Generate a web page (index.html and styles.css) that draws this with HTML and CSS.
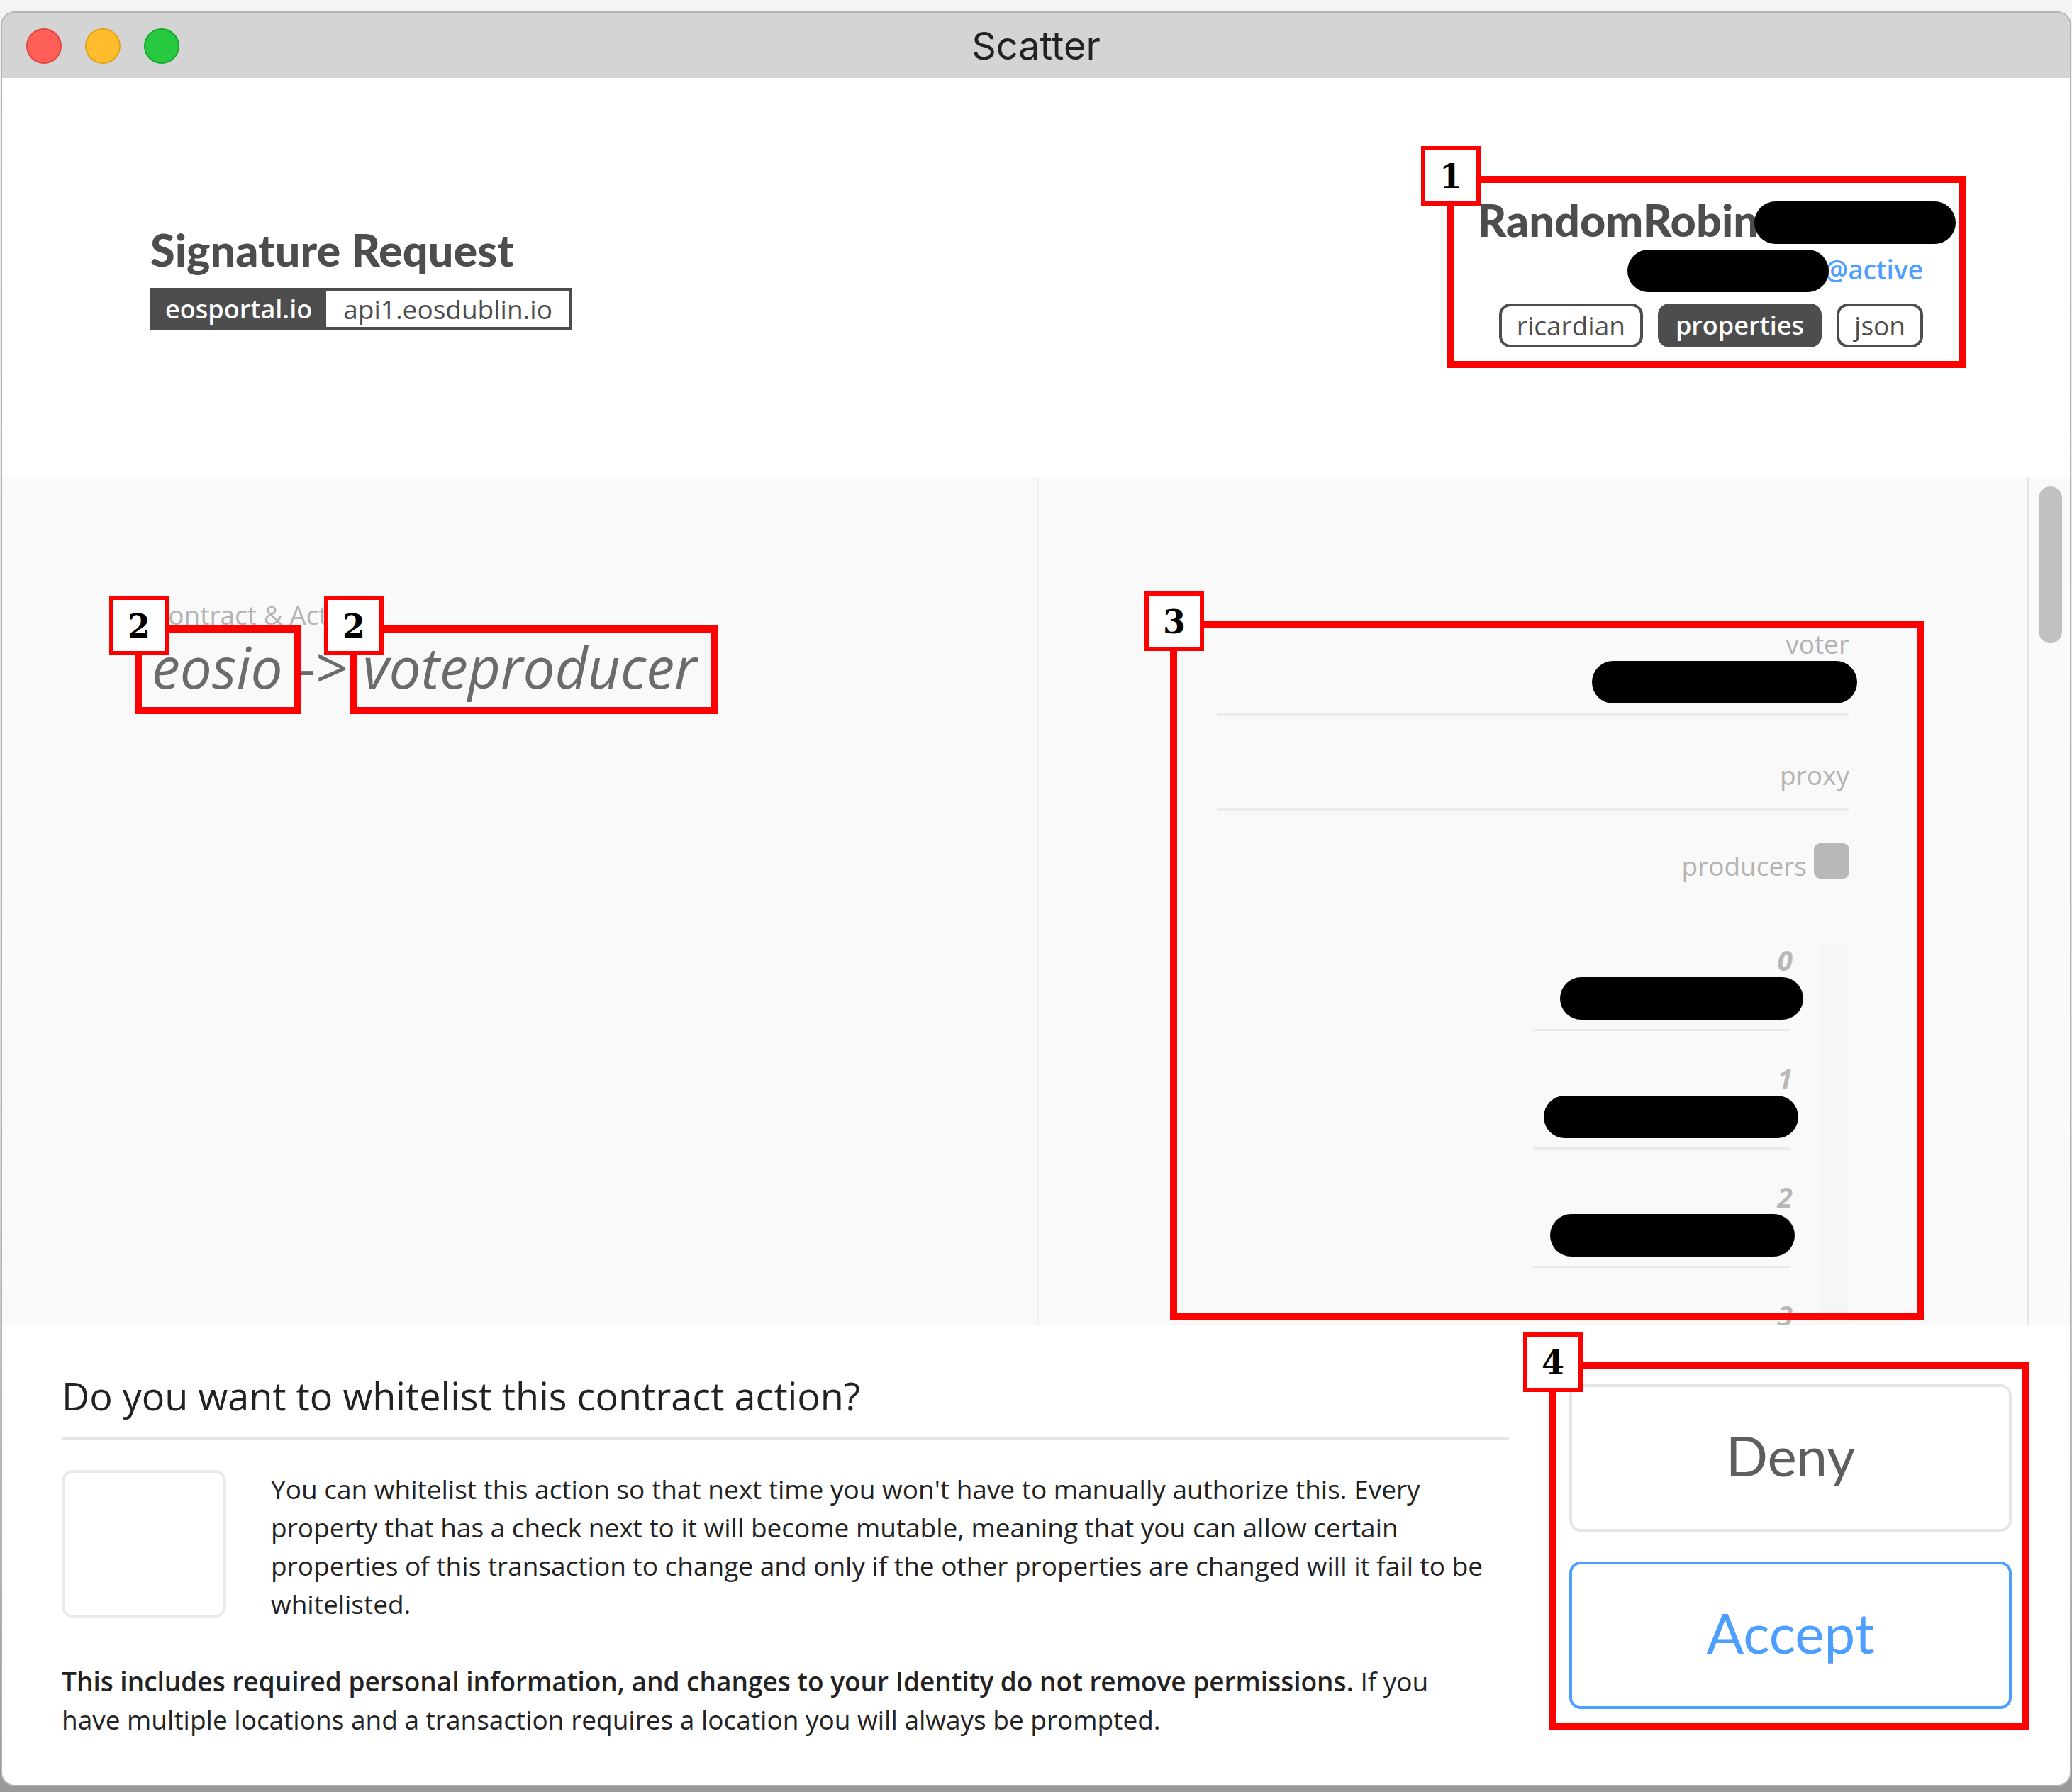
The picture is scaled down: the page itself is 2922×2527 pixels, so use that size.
FILE: index.html
```html
<!DOCTYPE html>
<html lang="en">
<head>
    <meta charset="UTF-8">
    <meta name="viewport" content="width=device-width, initial-scale=1.0">
    <title>Scatter</title>
    <link rel="stylesheet" href="styles.css">
</head>
<body>

<div class="window">
    <div class="title-bar">
        <div class="lights">
            <span class="light red"></span>
            <span class="light yellow"></span>
            <span class="light green"></span>
        </div>
        <span class="window-title">Scatter</span>
    </div>

    <header class="header">
        <div class="request">
            <h1>Signature Request</h1>
            <div class="origin">
                <b>eosportal.io</b>
                <span>api1.eosdublin.io</span>
            </div>
        </div>
        <div class="account">
            <h2>RandomRobin<span class="redacted name"></span></h2>
            <div class="authority"><span class="redacted name"></span>@active</div>
            <div class="tabs">
                <button>ricardian</button>
                <button class="active">properties</button>
                <button>json</button>
            </div>
        </div>
        <div class="callout callout-account"><span class="number">1</span></div>
    </header>

    <main class="panes">
        <section class="pane contract">
            <div class="label">Contract &amp; Action</div>
            <div class="action"><i>eosio</i> -&gt; <i>voteproducer</i></div>
            <div class="callout callout-contract"><span class="number">2</span></div>
            <div class="callout callout-action"><span class="number">2</span></div>
        </section>

        <section class="pane properties">
            <div class="property">
                <div class="label">voter</div>
                <span class="redacted voter"></span>
            </div>
            <div class="property empty">
                <div class="label">proxy</div>
            </div>
            <div class="producers">
                <label class="label" for="producers">producers</label>
                <input type="checkbox" id="producers">
            </div>
            <div class="list">
                <div class="item">
                    <div class="index">0</div>
                    <span class="redacted producer-0"></span>
                </div>
                <div class="item">
                    <div class="index">1</div>
                    <span class="redacted producer-1"></span>
                </div>
                <div class="item">
                    <div class="index">2</div>
                    <span class="redacted producer-2"></span>
                </div>
                <div class="item">
                    <div class="index">3</div>
                </div>
            </div>
            <div class="callout callout-properties"><span class="number">3</span></div>
        </section>

        <div class="scrollbar"><div class="thumb"></div></div>
    </main>

    <footer class="footer">
        <div class="whitelist">
            <h3>Do you want to whitelist this contract action?</h3>
            <div class="whitelist-row">
                <input type="checkbox" id="whitelist">
                <label for="whitelist">You can whitelist this action so that next time you won't have to manually authorize this. Every property that has a check next to it will become mutable, meaning that you can allow certain properties of this transaction to change and only if the other properties are changed will it fail to be whitelisted.</label>
            </div>
            <p><b>This includes required personal information, and changes to your Identity do not remove permissions.</b> If you have multiple locations and a transaction requires a location you will always be prompted.</p>
        </div>
        <div class="buttons">
            <button>Deny</button>
            <button class="accept">Accept</button>
        </div>
        <div class="callout callout-buttons"><span class="number">4</span></div>
    </footer>
</div>

</body>
</html>
```
FILE: styles.css
```css
* {
    box-sizing: border-box;
}
body {
    margin: 0;
    height: 100vh;
    padding: 16px 1px 8px;
    background: linear-gradient(#f4f4f4, #dddddd 60%, #999999);
    font-family: "Open Sans", sans-serif;
    font-size: 37px;
    line-height: 54px;
    color: #222;
}
h1, h2, h3, p {
    margin: 0;
}
button {
    font-family: inherit;
    cursor: pointer;
}
input[type="checkbox"] {
    appearance: none;
    margin: 0;
    flex-shrink: 0;
}
.window {
    height: 100%;
    display: flex;
    flex-direction: column;
    background-color: #fff;
    border: 2px solid #b4b4b4;
    border-radius: 20px;
    overflow: hidden;
}

/* title bar */
.title-bar {
    position: relative;
    flex-shrink: 0;
    display: flex;
    align-items: center;
    justify-content: center;
    height: 92px;
    padding-top: 2px;
    background-color: #d4d4d4;
}
.lights {
    position: absolute;
    left: 34px;
    display: flex;
    gap: 33px;
}
.light {
    width: 50px;
    height: 50px;
    border-radius: 50%;
    border: 2px solid;
}
.red {
    background-color: #ff5f57;
    border-color: #e2463f;
}
.yellow {
    background-color: #ffbd2e;
    border-color: #e1a116;
}
.green {
    background-color: #28c940;
    border-color: #12ac28;
}
.window-title {
    font-family: Inter, sans-serif;
    font-size: 54px;
}

/* header */
.header {
    position: relative;
    flex-shrink: 0;
    display: flex;
    align-items: center;
    justify-content: space-between;
    height: 563px;
    padding: 0 207px 0 209px;
    color: #4d4d4d;
}
.header h1, .header h2 {
    padding-bottom: 8px;
    font-family: Lato, sans-serif;
    font-size: 63px;
    line-height: 68px;
    font-weight: 900;
}
.origin {
    display: inline-flex;
    margin-top: 12px;
    border: 4px solid #4d4d4d;
    line-height: 51px;
}
.origin b {
    padding: 0 20px 0 17px;
    background-color: #4d4d4d;
    font-size: 36px;
    color: #fff;
    font-weight: 600;
}
.origin span {
    padding: 0 24px;
}
.account {
    display: flex;
    flex-direction: column;
    align-items: flex-end;
    margin-bottom: 18px;
}
.account h2 {
    display: flex;
    align-items: flex-end;
    margin-right: -40px;
}
.authority {
    display: flex;
    align-items: flex-start;
    height: 60px;
    line-height: 56px;
    font-weight: 600;
    color: #4d9fff;
}
.redacted {
    position: relative;
    display: block;
    height: 60px;
    border-radius: 30px;
    background-color: #000;
}
.name {
    width: 284px;
    margin: 0 -6px;
}
.tabs {
    display: flex;
    gap: 21px;
    margin-top: 16px;
}
.tabs button {
    padding: 0 21px;
    border: 4px solid #4d4d4d;
    border-radius: 16px;
    background-color: #fff;
    font-size: 37px;
    line-height: 54px;
    color: #4d4d4d;
}
.tabs .active {
    background-color: #4d4d4d;
    font-size: 36px;
    font-weight: 600;
    color: #fff;
}

/* contract and properties */
.panes {
    flex: 1;
    min-height: 0;
    display: flex;
    overflow: hidden;
    background-color: #f9f9f9;
}
.pane {
    position: relative;
}
.label {
    line-height: 48px;
    color: #b3b3b3;
}
.contract {
    width: 1462px;
    padding: 170px 0 0 211px;
    border-right: 2px solid #f1f1f1;
}
.action {
    font-size: 80px;
    line-height: 98px;
    color: #6b6b6b;
}
.properties {
    flex: 1;
    padding: 211px 250px 0 251px;
    text-align: right;
}
.property {
    display: flex;
    flex-direction: column;
    align-items: flex-end;
    padding-bottom: 14px;
    border-bottom: 4px solid #ebebeb;
}
.property.empty {
    margin-top: 59px;
    padding-bottom: 23px;
}
.voter {
    width: 374px;
    margin-right: -11px;
}
.producers {
    display: flex;
    justify-content: flex-end;
    align-items: flex-start;
    gap: 10px;
    margin-top: 45px;
}
.producers .label {
    margin-top: 8px;
}
.producers input {
    width: 50px;
    height: 50px;
    border-radius: 9px;
    background-color: #b8b8b8;
}
.list {
    display: flex;
    flex-direction: column;
    align-items: flex-end;
    gap: 43px;
    margin-top: 85px;
    padding-right: 42px;
    border-right: 42px solid #f6f6f6;
}
.item {
    display: flex;
    flex-direction: column;
    align-items: flex-end;
    width: 362px;
    padding-bottom: 13px;
    border-bottom: 3px solid #ebebeb;
}
.index {
    margin-right: -4px;
    font-size: 39px;
    line-height: 48px;
    font-style: italic;
    font-weight: 700;
    color: #b8b8b8;
}
.producer-0 {
    width: 343px;
    margin-right: -19px;
}
.producer-1 {
    width: 359px;
    margin-right: -12px;
}
.producer-2 {
    width: 345px;
    margin-right: -7px;
}
.scrollbar {
    width: 61px;
    padding: 13px 11px 0 14px;
    border-left: 3px solid #e6e6e6;
    background-color: #fafafa;
}
.thumb {
    height: 221px;
    border-radius: 17px;
    background-color: #c1c1c1;
}

/* footer */
.footer {
    position: relative;
    flex-shrink: 0;
    display: flex;
    align-items: flex-start;
    gap: 85px;
    padding: 60px 82px 65px 84px;
}
.whitelist {
    flex: 1;
}
.whitelist h3 {
    padding-bottom: 19px;
    border-bottom: 4px solid #e6e6e6;
    font-size: 54px;
    line-height: 80px;
    font-weight: 400;
}
.whitelist-row {
    display: flex;
    gap: 63px;
    margin: 42px 0 55px;
}
.whitelist-row input {
    width: 232px;
    height: 208px;
    border: 4px solid #e9e9e9;
    border-radius: 16px;
}
.whitelist p {
    padding-right: 60px;
}
.whitelist b {
    font-weight: 600;
}
.buttons {
    display: flex;
    flex-direction: column;
    gap: 42px;
    width: 624px;
    padding-top: 24px;
}
.buttons button {
    height: 208px;
    padding-bottom: 10px;
    border: 4px solid #e6e6e6;
    border-radius: 16px;
    background-color: #fff;
    font-family: Lato, sans-serif;
    font-size: 78px;
    color: #5e5e5e;
}
.buttons .accept {
    border-color: #4d9fff;
    color: #4d9fff;
}

/* numbered red frames */
.callout {
    position: absolute;
    border: 10px solid #ff0000;
    pointer-events: none;
}
.number {
    position: absolute;
    top: -52px;
    left: -46px;
    width: 84px;
    height: 84px;
    border: 6px solid #ff0000;
    background-color: #fff;
    font-family: "DejaVu Serif", serif;
    font-size: 46px;
    line-height: 74px;
    font-weight: 700;
    text-align: center;
    color: #000;
}
.callout-account {
    top: 138px;
    right: 146px;
    width: 733px;
    height: 271px;
}
.callout-contract {
    top: 209px;
    left: 187px;
    width: 235px;
    height: 125px;
}
.callout-action {
    top: 209px;
    left: 490px;
    width: 519px;
    height: 125px;
}
.callout-properties {
    top: 203px;
    right: 145px;
    width: 1063px;
    height: 986px;
}
.callout-buttons {
    top: 53px;
    right: 57px;
    width: 678px;
    height: 518px;
}
```
